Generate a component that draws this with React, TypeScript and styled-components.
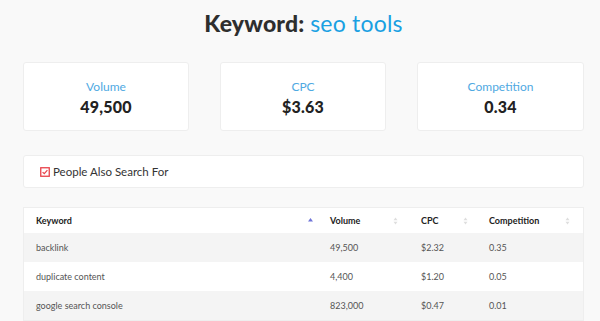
import React from "react";
import styled, { createGlobalStyle } from "styled-components";

const Global = createGlobalStyle`
  html, body { margin: 0; padding: 0; background: #f9f9f9; }
  body { font-family: Lato, "Open Sans", sans-serif; -webkit-font-smoothing: antialiased; }
`;

const Page = styled.div`
  width: 600px;
  height: 321px;
  overflow: hidden;
  box-sizing: border-box;
  padding: 0 16px 0 23px;
  display: flex;
  flex-direction: column;
`;

const Title = styled.h1`
  margin: 9px 0 0;
  height: 33px;
  text-align: center;
  font-size: 23px;
  line-height: 28px;
  font-weight: 900;
  color: #2e2e2e;
  letter-spacing: 0.2px;
  span { color: #1aa0e2; font-weight: 400; letter-spacing: 0.2px; }
`;

const Stats = styled.div`
  margin-top: 20px;
  display: grid;
  grid-template-columns: 166px 166px 167px;
  column-gap: 31px;
`;

const Card = styled.div`
  background: #fff;
  border: 1px solid #eeeeee;
  border-radius: 3px;
  box-sizing: border-box;
`;

const StatCard = styled(Card)`
  height: 69px;
  display: flex;
  flex-direction: column;
  align-items: center;
  padding-top: 17px;
`;

const StatLabel = styled.div`
  color: #4fa9e2;
  font-size: 12px;
  font-weight: 400;
  line-height: 14px;
`;

const StatValue = styled.div`
  color: #222;
  font-size: 16px;
  font-weight: 900;
  line-height: 18px;
  margin-top: 4px;
  letter-spacing: 0.2px;
`;

const Section = styled(Card)`
  margin-top: 24px;
  height: 33px;
  display: flex;
  align-items: center;
  padding-left: 16px;
  gap: 3px;
  color: #333;
  font-size: 11.5px;
`;

const Table = styled.table`
  margin-top: 19px;
  width: 561px;
  border-collapse: collapse;
  background: #fff;
  border: 1px solid #eeeeee;
  font-size: 9px;
  color: #555;
  table-layout: fixed;
`;

const Th = styled.th<{ $w: number }>`
  width: ${(p) => p.$w}px;
  height: 25px;
  padding: 0 0 0 12px;
  text-align: left;
  font-weight: 700;
  color: #222;
  position: relative;
`;

const Td = styled.td`
  height: 29px;
  padding: 0 0 0 12px;
`;

const Row = styled.tr<{ $alt: boolean }>`
  background: ${(p) => (p.$alt ? "#f4f4f4" : "#ffffff")};
`;

const SortIcon = styled.svg<{ $r: number }>`
  position: absolute;
  right: ${(p) => p.$r}px;
  top: 9px;
`;

const Sort = ({ active, r }: { active?: boolean; r: number }) => (
  <SortIcon $r={r} width="5" height="8" viewBox="0 0 5 8">
    {active ? (
      <path d="M2.5 1 L5 4.5 L0 4.5 Z" fill="#6f74d8" />
    ) : (
      <>
        <path d="M2.5 0.5 L4.5 3.3 L0.5 3.3 Z" fill="#dedede" />
        <path d="M2.5 7.5 L4.5 4.7 L0.5 4.7 Z" fill="#dedede" />
      </>
    )}
  </SortIcon>
);

const CheckIcon = styled.svg`
  flex: none;
`;

const Check = () => (
  <CheckIcon width="10" height="10" viewBox="0 0 10 10">
    <rect x="0.75" y="0.75" width="8.5" height="8.5" fill="#fff" stroke="#e8424a" strokeWidth="1.3" />
    <path d="M2.6 5.1 L4.3 6.7 L7.4 3.2" fill="none" stroke="#e8424a" strokeWidth="1.2" />
  </CheckIcon>
);

const rows = [
  ["backlink", "49,500", "$2.32", "0.35"],
  ["duplicate content", "4,400", "$1.20", "0.05"],
  ["google search console", "823,000", "$0.47", "0.01"],
];

export default function App() {
  return (
    <>
      <Global />
      <Page>
        <Title>
          Keyword: <span>seo tools</span>
        </Title>
        <Stats>
          <StatCard>
            <StatLabel>Volume</StatLabel>
            <StatValue>49,500</StatValue>
          </StatCard>
          <StatCard>
            <StatLabel>CPC</StatLabel>
            <StatValue>$3.63</StatValue>
          </StatCard>
          <StatCard>
            <StatLabel>Competition</StatLabel>
            <StatValue>0.34</StatValue>
          </StatCard>
        </Stats>
        <Section>
          <Check />
          People Also Search For
        </Section>
        <Table>
          <thead>
            <tr>
              <Th $w={282}>Keyword<Sort active r={5} /></Th>
              <Th $w={79}>Volume<Sort r={11} /></Th>
              <Th $w={56}>CPC<Sort r={9} /></Th>
              <Th $w={94}>Competition<Sort r={13} /></Th>
            </tr>
          </thead>
          <tbody>
            {rows.map((r, i) => (
              <Row key={i} $alt={i % 2 === 0}>
                {r.map((c, j) => (
                  <Td key={j}>{c}</Td>
                ))}
              </Row>
            ))}
          </tbody>
        </Table>
      </Page>
    </>
  );
}
